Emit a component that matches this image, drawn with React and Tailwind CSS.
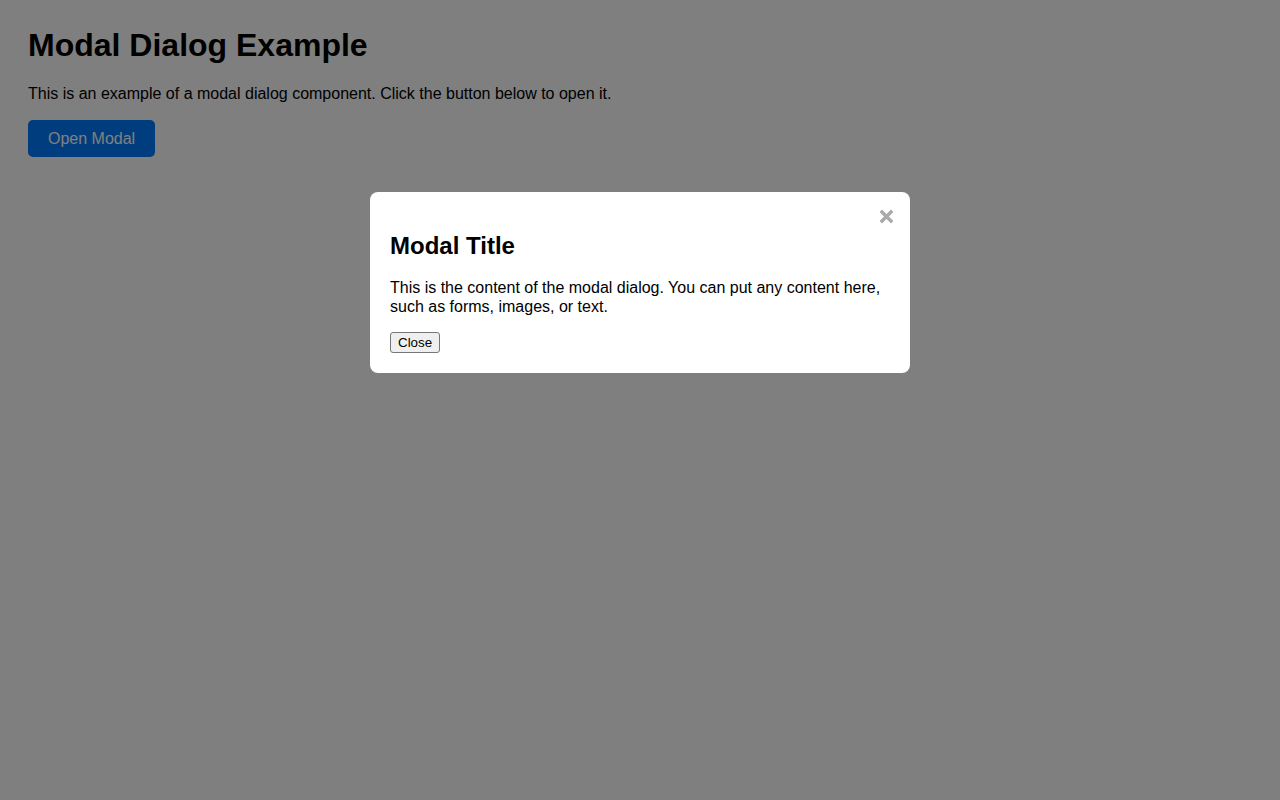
import React, { useState } from 'react';

const App = () => {
  const [open, setOpen] = useState(true);

  return (
    <div className="min-h-screen bg-white px-[28px] pt-[27px] text-black" style={{ fontFamily: '"Liberation Sans", Arial, sans-serif' }}>
      <h1 className="mb-[21.44px] text-[32px] font-bold leading-[36.8px]">Modal Dialog Example</h1>
      <p className="mb-4 text-base leading-[18.4px]">
        This is an example of a modal dialog component. Click the button below to open it.
      </p>
      <button
        onClick={() => setOpen(true)}
        className="h-[37px] rounded-[5px] bg-[#007bff] px-5 text-base leading-[17px] text-white"
      >
        Open Modal
      </button>

      {open && (
        <div className="fixed inset-0 z-10 bg-[rgba(0,0,0,0.5)]">
          <div className="mx-auto mt-[192px] max-w-[540px] rounded-lg bg-white p-5">
            <span
              onClick={() => setOpen(false)}
              className="float-right -mr-[3px] -mt-[3px] cursor-pointer text-[#aaa]"
            >
              <svg width="13" height="15" viewBox="0 0 13 15">
                <path d="M2 3 L11 12 M11 3 L2 12" stroke="currentColor" strokeWidth="3.4" strokeLinecap="square" fill="none" />
              </svg>
            </span>
            <h2 className="mt-[19.92px] mb-[19.92px] text-2xl font-bold leading-[27.6px]">Modal Title</h2>
            <p className="mb-4 text-base leading-[18.4px]">
              This is the content of the modal dialog. You can put any content here, such as forms, images, or text.
            </p>
            <button
              onClick={() => setOpen(false)}
              className="block h-[21px] rounded-[3px] border border-[#767676] bg-[#efefef] px-[7px] text-[13.33px] leading-[15px] text-black"
            >
              Close
            </button>
          </div>
        </div>
      )}
    </div>
  );
};

export default App;
